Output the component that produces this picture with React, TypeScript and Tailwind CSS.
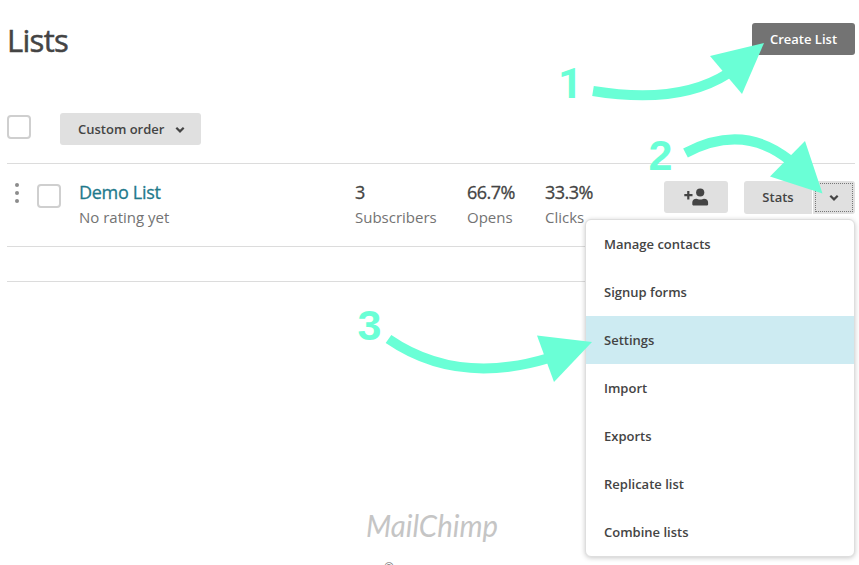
import React from "react";

const menuItems = [
  "Manage contacts",
  "Signup forms",
  "Settings",
  "Import",
  "Exports",
  "Replicate list",
  "Combine lists",
];

const stats = [
  { value: "3", label: "Subscribers", width: "w-[112px]" },
  { value: "66.7%", label: "Opens", width: "w-[78px]" },
  { value: "33.3%", label: "Clicks", width: "w-[119px]" },
];

function Chevron() {
  return (
    <svg width="10" height="8" viewBox="0 0 10 8" fill="none" aria-hidden="true">
      <path d="M1.3 1.8 5 5.4 8.7 1.8" stroke="#444" strokeWidth="2.2" />
    </svg>
  );
}

function Checkbox() {
  return <span className="block size-6 shrink-0 rounded-[4px] border-2 border-[#cfcfcf] bg-white" />;
}

function DragHandle() {
  return (
    <span className="flex flex-col gap-1">
      <i className="block size-1 rounded-full bg-[#8c8c8c]" />
      <i className="block size-1 rounded-full bg-[#8c8c8c]" />
      <i className="block size-1 rounded-full bg-[#8c8c8c]" />
    </span>
  );
}

function AddPerson() {
  return (
    <svg width="25" height="18" viewBox="0 0 25 18" fill="#444" aria-hidden="true">
      <path d="M3.200 3h2.200v3.100h3.100v2.200H5.400v3.100H3.200V8.300H.3V6.100h2.900z" />
      <circle cx="16.200" cy="4.500" r="4.100" />
      <path d="M8.300 16.600v-2c0-2.300 1.500-3.900 4.100-3.900 1.400 0 1.900.8 3.800.8s2.400-.8 3.800-.8c2.600 0 4.100 1.600 4.100 3.900v2c0 .5-.4.800-.8.800H9.100c-.4 0-.8-.3-.8-.8z" />
    </svg>
  );
}

function Menu() {
  return (
    <ul className="absolute top-[219px] left-[585px] w-[270px] overflow-hidden rounded-[6px] border border-[#dedede] bg-white shadow-[0_1px_5px_rgba(0,0,0,0.22)]">
      {menuItems.map((item) => (
        <li
          key={item}
          className={
            item === "Settings"
              ? "flex h-12 items-center bg-[#cdebf2] px-[18px] pt-[2px]"
              : "flex h-12 items-center px-[18px] pt-[2px]"
          }
        >
          {item}
        </li>
      ))}
    </ul>
  );
}

function Annotations() {
  return (
    <svg
      className="pointer-events-none absolute inset-0"
      width="859"
      height="565"
      viewBox="0 0 859 565"
      fill="none"
      aria-hidden="true"
    >
      <g stroke="#6affd6" strokeWidth="10">
        <path d="M593 91Q679 105 728 73.500" />
        <path d="M685.500 153Q743 122.500 790 160.500" />
        <path d="M388.500 339Q457 386 549 358" />
      </g>
      <g fill="#6affd6">
        <path d="M710 56 764 43 742 94z" />
        <path d="M805 141 822.500 193.500 770 176.500z" />
        <path d="M537 335.500 592 342 554 382z" />
      </g>
      <g fill="#6affd6" className="font-['Liberation_Sans',sans-serif] text-[43px] font-bold">
        <text x="558" y="98" className="font-['Roboto',sans-serif]">1</text>
        <text x="648.500" y="170">2</text>
        <text x="357.500" y="340">3</text>
      </g>
    </svg>
  );
}

export default function App() {
  return (
    <main className="relative h-[565px] w-[859px] overflow-hidden bg-white pl-[7px] pr-1 font-['Open_Sans',sans-serif] text-[13px] font-semibold text-[#444]">
      <header className="flex h-[113px] items-start justify-between pt-[23px]">
        <h1 className="text-[31px] leading-[35px] font-normal tracking-[-0.7px] [-webkit-text-stroke:0.5px_#444]">
          Lists
        </h1>
        <button className="h-8 w-[103px] rounded-[3px] bg-[#737373] pt-[2px] text-white">Create List</button>
      </header>

      <div className="flex h-[50px] items-start">
        <div className="pt-[2px]">
          <Checkbox />
        </div>
        <button className="ml-[29px] flex h-8 w-[141px] items-center gap-[11px] rounded-[3px] bg-[#e0e0e0] pt-[2px] pl-[18px]">
          Custom order
          <Chevron />
        </button>
      </div>

      <section className="flex h-[84px] items-start border-y border-[#dcdcdc] pt-[17px]">
        <div className="w-[30px] pt-[2px] pl-2">
          <DragHandle />
        </div>
        <div className="pt-[3px]">
          <Checkbox />
        </div>
        <div className="ml-[18px] w-[276px]">
          <div className="h-6 text-[18px] leading-[22px] font-normal tracking-[-0.3px] text-[#1f7a8c] [-webkit-text-stroke:0.3px_#1f7a8c]">
            Demo List
          </div>
          <div className="text-[15px] leading-[24px] font-normal text-[#737373]">No rating yet</div>
        </div>
        {stats.map((s) => (
          <div key={s.label} className={s.width}>
            <div className="h-6 text-[18px] leading-[22px] font-normal tracking-[-0.5px] [-webkit-text-stroke:0.3px_#444]">
              {s.value}
            </div>
            <div className="text-[15px] leading-[24px] font-normal text-[#737373]">{s.label}</div>
          </div>
        ))}
        <button className="flex h-8 w-16 items-center justify-center rounded-[3px] bg-[#e0e0e0]">
          <AddPerson />
        </button>
        <div className="ml-4 flex gap-px">
          <button className="h-[33px] w-[68px] rounded-l-[3px] bg-[#e0e0e0]">Stats</button>
          <button className="h-[33px] w-[42px] rounded-r-[3px] bg-[#e0e0e0] p-[2px]">
            <span className="flex h-full w-full items-center justify-center border border-dotted border-[#777]">
              <Chevron />
            </span>
          </button>
        </div>
      </section>
      <div className="h-[35px] border-b border-[#dcdcdc]" />

      <footer className="flex h-[283px] flex-col items-start pt-[226px] pl-[358px] text-[#c5c5c5]">
        <svg
          className="shrink-0 overflow-visible"
          width="136"
          height="44"
          viewBox="0 0 136 44"
          fill="currentColor"
          aria-label="MailChimp"
        >
          <text
            x="1"
            y="29"
            textLength="132"
            lengthAdjust="spacingAndGlyphs"
            className="font-['Lato',cursive] text-[31px] font-normal italic"
          >
            MailChimp
          </text>
        </svg>
        <span className="pt-[8px] pl-[19px] text-[12px] leading-4 font-normal text-[#777]">®</span>
      </footer>

      <Menu />
      <Annotations />
    </main>
  );
}
